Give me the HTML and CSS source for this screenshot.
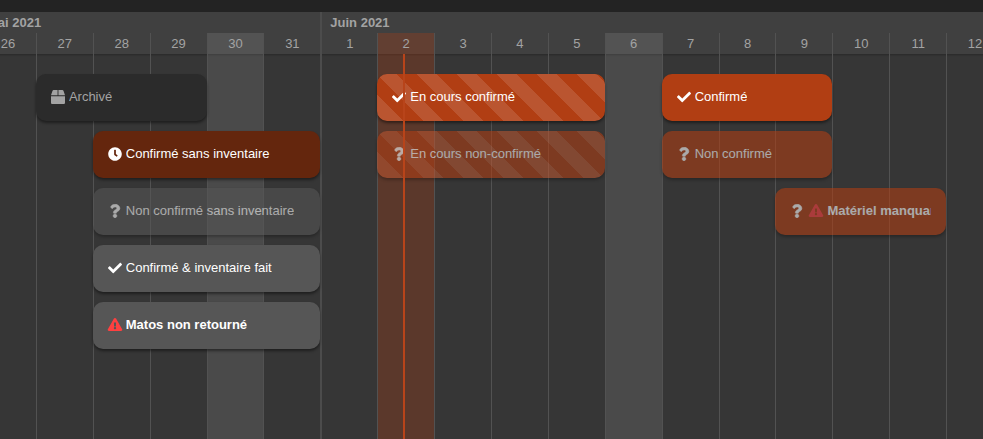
FILE: index.html
```html
<!DOCTYPE html>
<html lang="fr">
<head>
<meta charset="utf-8">
<title>Calendrier</title>
<link rel="stylesheet" href="styles.css">
</head>
<body>
<svg class="sprite" aria-hidden="true">
  <symbol id="check" viewBox="0 0 512 512"><path d="M173.898 439.404l-166.4-166.4c-9.997-9.997-9.997-26.206 0-36.204l36.203-36.204c9.997-9.998 26.207-9.998 36.204 0L192 312.69 432.095 72.596c9.997-9.997 26.207-9.997 36.204 0l36.203 36.204c9.997 9.997 9.997 26.206 0 36.204l-294.4 294.401c-9.998 9.997-26.207 9.997-36.204-.001z"/></symbol>
  <symbol id="clock" viewBox="0 0 512 512"><path d="M256,8C119,8,8,119,8,256S119,504,256,504,504,393,504,256,393,8,256,8Zm92.49,313h0l-20,25a16,16,0,0,1-22.49,2.5h0l-67-49.72a40,40,0,0,1-15-31.23V112a16,16,0,0,1,16-16h32a16,16,0,0,1,16,16V256l58,42.5A16,16,0,0,1,348.49,321Z"/></symbol>
  <symbol id="question" viewBox="-10 -10 404 532"><path stroke="currentColor" stroke-width="20" d="M202.021 0C122.202 0 70.503 32.703 29.914 91.026c-7.363 10.58-5.093 25.086 5.178 32.874l43.138 32.709c10.373 7.865 25.132 6.026 33.253-4.148 25.049-31.381 43.63-49.449 82.757-49.449 30.764 0 68.816 19.799 68.816 49.631 0 22.552-18.617 34.134-48.993 51.164-35.423 19.86-82.299 44.576-82.299 106.405V320c0 13.255 10.745 24 24 24h72.471c13.255 0 24-10.745 24-24v-5.773c0-42.86 125.268-44.645 125.268-160.627C377.504 66.256 286.902 0 202.021 0zM192 373.459c-38.196 0-69.271 31.075-69.271 69.271 0 38.195 31.075 69.27 69.271 69.27s69.271-31.075 69.271-69.271-31.075-69.27-69.271-69.27z"/></symbol>
  <symbol id="warning" viewBox="0 0 576 512"><path d="M569.517 440.013C587.975 472.007 564.806 512 527.94 512H48.054c-36.937 0-59.999-40.055-41.577-71.987L246.423 23.985c18.467-32.009 64.72-31.951 83.154 0l239.94 416.028zM288 354c-25.405 0-46 20.595-46 46s20.595 46 46 46 46-20.595 46-46-20.595-46-46-46zm-43.673-165.346l7.418 136c.347 6.364 5.609 11.346 11.982 11.346h48.546c6.373 0 11.635-4.982 11.982-11.346l7.418-136c.375-6.874-5.098-12.654-11.982-12.654h-63.383c-6.884 0-12.356 5.78-11.981 12.654z"/></symbol>
  <symbol id="box" viewBox="0 0 512 512"><path d="M509.5 184.6L458.9 32.8C452.4 13.2 434.1 0 413.4 0H272v192h238.7c-.4-2.5-.4-5-1.2-7.4zM240 0H98.6c-20.7 0-39 13.2-45.5 32.8L2.5 184.6c-.8 2.4-.8 4.9-1.2 7.4H240V0zM0 224v240c0 26.5 21.5 48 48 48h416c26.5 0 48-21.5 48-48V224H0z"/></symbol>
</svg>
<main class="timeline">
  <div class="track">
    <div class="months">
      <div class="month month-may">Mai 2021</div>
      <div class="month month-june">Juin 2021</div>
    </div>
    <div class="days">
      <div class="day">26</div>
      <div class="day">27</div>
      <div class="day">28</div>
      <div class="day">29</div>
      <div class="day sunday">30</div>
      <div class="day">31</div>
      <div class="day month-start">1</div>
      <div class="day today">2</div>
      <div class="day">3</div>
      <div class="day">4</div>
      <div class="day">5</div>
      <div class="day sunday">6</div>
      <div class="day">7</div>
      <div class="day">8</div>
      <div class="day">9</div>
      <div class="day">10</div>
      <div class="day">11</div>
      <div class="day">12</div>
    </div>
    <div class="events">
      <div class="event archived from-27 three-days row-1"><svg class="icon"><use href="#box"/></svg><span class="title">Archivé</span></div>
      <div class="event current from-2 four-days row-1"><svg class="icon"><use href="#check"/></svg><span class="title">En cours confirmé</span></div>
      <div class="event from-7 three-days row-1"><svg class="icon"><use href="#check"/></svg><span class="title">Confirmé</span></div>
      <div class="event future from-28 four-days row-2"><svg class="icon"><use href="#clock"/></svg><span class="title">Confirmé sans inventaire</span></div>
      <div class="event current unconfirmed from-2 four-days row-2"><svg class="icon"><use href="#question"/></svg><span class="title">En cours non-confirmé</span></div>
      <div class="event unconfirmed from-7 three-days row-2"><svg class="icon"><use href="#question"/></svg><span class="title">Non confirmé</span></div>
      <div class="event past unconfirmed from-28 four-days row-3"><svg class="icon"><use href="#question"/></svg><span class="title">Non confirmé sans inventaire</span></div>
      <div class="event unconfirmed alert from-9 three-days row-3"><svg class="icon"><use href="#question"/></svg><svg class="icon danger"><use href="#warning"/></svg><span class="title">Matériel manquant</span></div>
      <div class="event past from-28 four-days row-4"><svg class="icon"><use href="#check"/></svg><span class="title">Confirmé &amp; inventaire fait</span></div>
      <div class="event past alert from-28 four-days row-5"><svg class="icon danger"><use href="#warning"/></svg><span class="title">Matos non retourné</span></div>
    </div>
    <div class="now"></div>
  </div>
</main>
</body>
</html>
```
FILE: styles.css
```css
* { box-sizing: border-box; }

body {
  margin: 0;
  min-height: 100vh;
  display: flex;
  flex-direction: column;
  padding-top: 12px;
  background: #232323;
  color: #a3a3a3;
  font: 13px/21px "Liberation Sans", Arial, sans-serif;
}

.sprite { position: absolute; width: 0; height: 0; }

.timeline {
  flex: 1;
  display: flex;
  overflow: hidden;
  background: #363636;
}

/* The range starts and ends part-way through a day. */
.track {
  flex: 1;
  margin: 0 -20px 0 -21px;
  display: grid;
  grid-template-columns: repeat(18, minmax(0, 1fr));
  grid-template-rows: 21px 21px 1fr;
}

.months {
  grid-area: 1 / 1 / 3 / -1;
  display: grid;
  grid-template-columns: subgrid;
  background: #404040;
  box-shadow: 0 1px 2px rgba(0, 0, 0, .25);
}

.month { padding-left: 8px; font-weight: bold; }
.month-may { grid-column: 1 / span 6; }
.month-june { grid-column: 7 / -1; border-left: 2px solid #4c4c4c; }

.days {
  grid-area: 2 / 1 / 4 / -1;
  display: grid;
  grid-template-columns: subgrid;
}

.day { border-left: 1px solid #525252; text-align: center; }
.month-start { border-left: 2px solid #4c4c4c; }
.sunday { background: rgba(255, 255, 255, .1); }
.today { background: rgba(179, 63, 20, .3); }

.events {
  grid-area: 3 / 1 / 4 / -1;
  display: grid;
  grid-template-columns: subgrid;
  grid-auto-rows: 47px;
  row-gap: 10px;
  align-content: start;
  padding-top: 20px;
}

.event {
  display: flex;
  align-items: center;
  gap: 3px;
  padding: 0 15px 2px 14px;
  border-radius: 10px;
  background-color: #b13e13;
  color: #fff;
  box-shadow: 0 2px 3px rgba(0, 0, 0, .45);
}

.title { overflow: hidden; white-space: nowrap; }
.icon { flex: none; width: 16px; height: 14px; fill: currentColor; }
.danger { height: 13px; color: #ff4040; }

.archived { background-color: #2b2b2b; color: #a3a3a3; }
.future { background-color: #64260d; }
.past { background-color: #565656; }
.unconfirmed { opacity: .58; }
.alert { font-weight: bold; }
.current {
  background-image: linear-gradient(
    45deg,
    rgba(255, 255, 255, .12) 25%,
    transparent 25% 50%,
    rgba(255, 255, 255, .12) 50% 75%,
    transparent 75%
  );
  background-size: 40px 40px;
}

.three-days { grid-column-end: span 3; }
.four-days { grid-column-end: span 4; }
.from-27 { grid-column-start: 2; }
.from-28 { grid-column-start: 3; }
.from-2 { grid-column-start: 8; }
.from-7 { grid-column-start: 13; }
.from-9 { grid-column-start: 15; }
.row-1 { grid-row: 1; }
.row-2 { grid-row: 2; }
.row-3 { grid-row: 3; }
.row-4 { grid-row: 4; }
.row-5 { grid-row: 5; }

.now {
  grid-area: 3 / 8 / 4 / 9;
  z-index: 1;
  width: 2px;
  margin-left: 45%;
  background: #b8441a;
}
```
